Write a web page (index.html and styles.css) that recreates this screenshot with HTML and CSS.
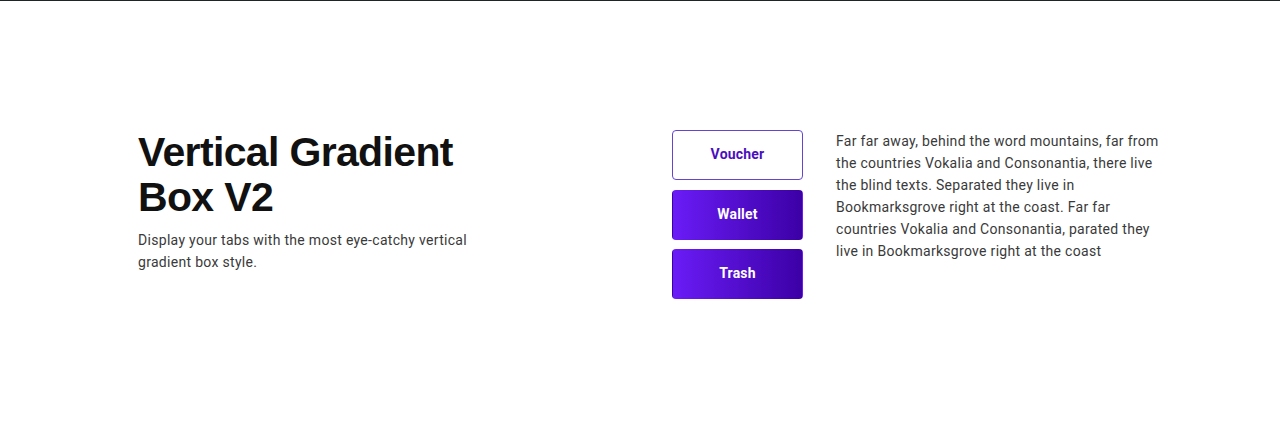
FILE: index.html
```html
<!DOCTYPE html>
<html lang="en">
<head>
<meta charset="utf-8">
<title>Vertical Gradient Box V2</title>
<link rel="stylesheet" href="styles.css">
</head>
<body>
<section class="section">
  <div class="intro">
    <h1 class="title">Vertical Gradient<br>Box V2</h1>
    <p class="lead">Display your tabs with the most eye-catchy vertical gradient box style.</p>
  </div>
  <div class="tabs">
    <div class="tab-list">
      <button class="tab tab-active">Voucher</button>
      <button class="tab">Wallet</button>
      <button class="tab">Trash</button>
    </div>
    <p class="tab-content">Far far away, behind the word mountains, far from the countries Vokalia and Consonantia, there live the blind texts. Separated they live in Bookmarksgrove right at the coast. Far far countries Vokalia and Consonantia, parated they live in Bookmarksgrove right at the coast</p>
  </div>
</section>
</body>
</html>
```

FILE: styles.css
```css
html, body {
  margin: 0;
  padding: 0;
  background: #ffffff;
}
body {
  border-top: 1px solid #1f2427;
  font-family: Roboto, "Liberation Sans", sans-serif;
  color: #333333;
}
.section {
  display: flex;
  align-items: flex-start;
  padding: 127px 0 0 138px;
  height: 293px;
}
.intro {
  width: 534px;
  flex: none;
}
.title {
  margin: 2px 0 0;
  font-family: "Liberation Sans", Arial, sans-serif;
  font-weight: 700;
  font-size: 41px;
  line-height: 45px;
  letter-spacing: -0.65px;
  color: #111111;
}
.lead {
  margin: 9px 0 0;
  width: 345px;
  font-size: 14px;
  line-height: 22px;
  letter-spacing: 0.3px;
  color: #3a3a3a;
}
.tabs {
  display: flex;
  gap: 33px;
  padding-top: 2px;
}
.tab-list {
  display: flex;
  flex-direction: column;
  gap: 9.5px;
  width: 131px;
  flex: none;
}
.tab {
  height: 50px;
  padding: 0 0 2px;
  border: 1px solid transparent;
  border-radius: 4px;
  background: linear-gradient(90deg, #6a1cf6 0%, #3c00a6 100%);
  color: #ffffff;
  font-family: Roboto, "Liberation Sans", sans-serif;
  font-weight: 700;
  font-size: 14px;
  letter-spacing: 0.2px;
  cursor: pointer;
}
.tab-active {
  background: #ffffff;
  border-color: #6445d2;
  color: #4a0ec0;
}
.tab-content {
  margin: 1px 0 0;
  width: 335px;
  font-size: 14px;
  line-height: 21.9px;
  letter-spacing: 0.3px;
  color: #3a3a3a;
}
```
